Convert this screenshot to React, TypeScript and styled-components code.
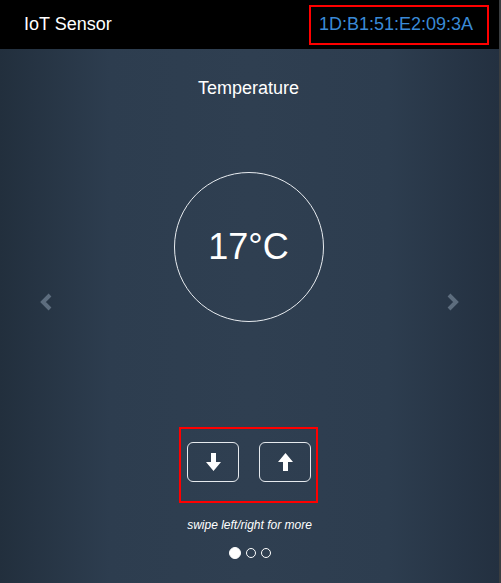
import styled, { createGlobalStyle } from "styled-components";

const GlobalStyle = createGlobalStyle`
  html, body {
    margin: 0;
    padding: 0;
    height: 100%;
  }

  body {
    font-family: "Liberation Sans", Arial, sans-serif;
    background: #2b3a4b;
  }

  #root {
    height: 100%;
  }
`;

const Frame = styled.div`
  display: flex;
  height: 583px;
`;

const Page = styled.div`
  flex: 1;
  display: flex;
  flex-direction: column;
  background: linear-gradient(to right, #222f3d 0%, #2d3d4f 22%, #2f3f51 50%, #2d3d4f 78%, #233040 100%);
  color: #fff;
`;

const EdgeStrip = styled.div`
  width: 2px;
  background: #3a3d40;
`;

const Header = styled.header`
  display: flex;
  align-items: center;
  justify-content: space-between;
  height: 49px;
  padding: 0 10px 0 24px;
  background: #000;
`;

const Title = styled.div`
  font-size: 18px;
  color: #fff;
`;

const MacBox = styled.div`
  display: flex;
  align-items: center;
  height: 36px;
  padding: 0 14px 0 8px;
  border: 2px solid #ff0000;
  color: #3a8ad6;
  font-size: 18px;
`;

const Main = styled.main`
  flex: 1;
  display: flex;
  flex-direction: column;
  align-items: center;
  padding-top: 29px;
`;

const Caption = styled.div`
  font-size: 18px;
  height: 20px;
  margin-right: 2px;
`;

const Stage = styled.div`
  display: flex;
  align-items: center;
  justify-content: space-between;
  width: 100%;
  box-sizing: border-box;
  padding: 0 38px;
  margin-top: 74px;
`;

const Nav = styled.div`
  width: 16px;
  height: 22px;
  display: flex;
  align-items: center;
  justify-content: center;
  margin-top: 110px;
`;

const Circle = styled.div`
  width: 148px;
  height: 148px;
  margin-right: 2px;
  border: 1px solid #e8ecf0;
  border-radius: 50%;
  display: flex;
  align-items: center;
  justify-content: center;
  font-size: 36px;
`;

const Controls = styled.div`
  display: flex;
  gap: 20px;
  margin-top: 105px;
  margin-right: 2px;
  padding: 13px 5px 19px 6px;
  border: 2px solid #ff0000;
`;

const ArrowButton = styled.button`
  width: 52px;
  height: 40px;
  border: 1px solid #e6eaee;
  border-radius: 6px;
  background: transparent;
  display: flex;
  align-items: center;
  justify-content: center;
  padding: 0;
  cursor: pointer;
`;

const Hint = styled.div`
  margin-top: 15px;
  font-size: 12px;
  font-style: italic;
`;

const Dots = styled.div`
  display: flex;
  align-items: center;
  gap: 5px;
  margin-top: 15px;
`;

const Dot = styled.span<{ $active?: boolean }>`
  width: ${(p) => (p.$active ? "12px" : "10px")};
  height: ${(p) => (p.$active ? "12px" : "10px")};
  border-radius: 50%;
  border: 1px solid #fff;
  background: ${(p) => (p.$active ? "#fff" : "transparent")};
  box-sizing: border-box;
`;

function Chevron({ dir }: { dir: "left" | "right" }) {
  return (
    <svg width="14" height="20" viewBox="0 0 14 20">
      <path
        d={dir === "left" ? "M11 3 L4 10 L11 17" : "M3 3 L10 10 L3 17"}
        fill="none"
        stroke="#5d6d7e"
        strokeWidth="4"
        strokeLinejoin="miter"
      />
    </svg>
  );
}

function Arrow({ dir }: { dir: "up" | "down" }) {
  return (
    <svg width="15" height="18" viewBox="0 0 15 18" style={{ transform: dir === "up" ? "rotate(180deg)" : undefined }}>
      <path d="M5 0 H10 V9 H15 L7.5 18 L0 9 H5 Z" fill="#fff" />
    </svg>
  );
}

export default function App() {
  return (
    <>
      <GlobalStyle />
      <Frame>
        <Page>
          <Header>
            <Title>IoT Sensor</Title>
            <MacBox>1D:B1:51:E2:09:3A</MacBox>
          </Header>
          <Main>
            <Caption>Temperature</Caption>
            <Stage>
              <Nav>
                <Chevron dir="left" />
              </Nav>
              <Circle>17°C</Circle>
              <Nav>
                <Chevron dir="right" />
              </Nav>
            </Stage>
            <Controls>
              <ArrowButton>
                <Arrow dir="down" />
              </ArrowButton>
              <ArrowButton>
                <Arrow dir="up" />
              </ArrowButton>
            </Controls>
            <Hint>swipe left/right for more</Hint>
            <Dots>
              <Dot $active />
              <Dot />
              <Dot />
            </Dots>
          </Main>
        </Page>
        <EdgeStrip />
      </Frame>
    </>
  );
}
